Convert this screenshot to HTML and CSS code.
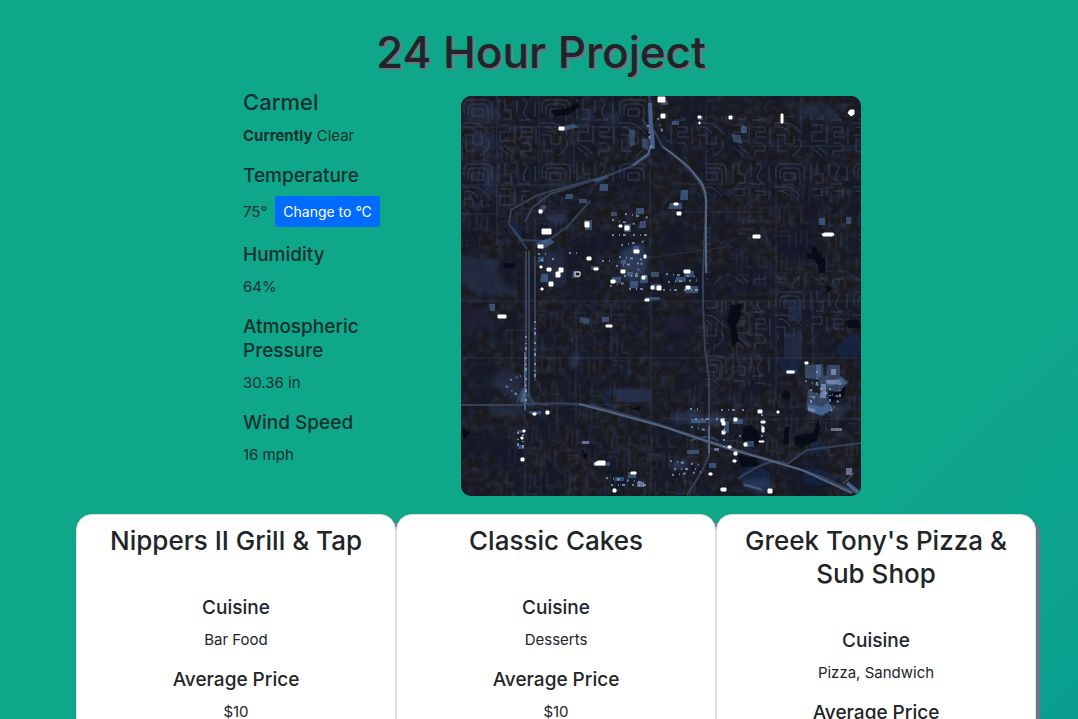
FILE: index.html
```html
<!DOCTYPE html>
<html lang="en">
<head>
<meta charset="utf-8">
<meta name="viewport" content="width=device-width, initial-scale=1">
<title>24 Hour Project</title>
<link rel="stylesheet" href="styles.css">
</head>
<body>
<header class="page-header"><h1 class="page-title">24 Hour Project</h1></header>
<main>
<section class="overview">
  <div class="weather">
    <h2 class="city">Carmel</h2>
    <p><strong>Currently</strong> Clear</p>
    <h3>Temperature</h3>
    <div class="temperature"><span>75°</span><button class="unit-button" type="button">Change to °C</button></div>
    <h3>Humidity</h3>
    <p>64%</p>
    <h3>Atmospheric Pressure</h3>
    <p>30.36 in</p>
    <h3>Wind Speed</h3>
    <p>16 mph</p>
  </div>
  <svg class="satellite" viewBox="0 0 400 400" role="img" aria-label="Satellite view of Carmel">
    <defs>
      <filter id="grain" x="0" y="0" width="100%" height="100%" color-interpolation-filters="sRGB">
        <feTurbulence type="fractalNoise" baseFrequency=".14" numOctaves="4" seed="8"/>
        <feColorMatrix values="0 0 0 0 .14  0 0 0 0 .17  0 0 0 0 .25  2.4 0 0 0 -.9"/>
      </filter>
      <filter id="shade" x="0" y="0" width="100%" height="100%" color-interpolation-filters="sRGB">
        <feTurbulence type="fractalNoise" baseFrequency=".03" numOctaves="4" seed="21"/>
        <feColorMatrix values="0 0 0 0 .07  0 0 0 0 .09  0 0 0 0 .16  0 2 0 0 -.75"/>
      </filter>
      <filter id="soft" x="0" y="0" width="400" height="400" filterUnits="userSpaceOnUse" color-interpolation-filters="sRGB"><feGaussianBlur stdDeviation=".6"/></filter>
      <filter id="diffuse" x="0" y="0" width="400" height="400" filterUnits="userSpaceOnUse" color-interpolation-filters="sRGB"><feGaussianBlur stdDeviation="2"/></filter>
      <pattern id="streets" width="78" height="64" patternUnits="userSpaceOnUse">
        <path d="M3 18V9Q3 4 9 4H25Q31 4 31 10V22M7 19V12Q7 8 12 8H22Q27 8 27 14V25M11 20V13H22V20Z M1 27H13Q18 27 22 31L29 38M5 31Q14 31 17 38M3 39H12V48H21V40M5 43V55H14M26 43Q31 49 25 55L19 60M38 3V23M44 3V14H50V23H43M56 4V17M61 3Q69 5 64 12T69 24H57M38 29H49V36H39V45H53M54 29V48M60 31H70V36H61V41H72M38 51L49 60M43 49L54 58M60 47Q72 45 70 55H60V60M74 6V21M75 31V48"/>
      </pattern>
      <pattern id="plots" width="40" height="46" patternUnits="userSpaceOnUse" patternTransform="rotate(3)">
        <path d="M4 3V18M9 2V22M14 5V18H20M26 3V17H35M4 26H17M4 31H15V41M22 26V42M27 24V38M33 25V42"/>
      </pattern>
    </defs>
    <rect width="400" height="400" fill="#1b191b"/>
    <rect width="400" height="400" filter="url(#grain)"/>
    <rect width="400" height="400" filter="url(#shade)"/>
    <g class="field" filter="url(#diffuse)">
      <path d="M120 13H131V29H120ZM142 16H159V29H142ZM22 61L37 74 35 99 22 102ZM0 158L38 164V178L55 199H15L0 187ZM341 7H359V22H341ZM361 12H376V26H361ZM155 293H190V306H155ZM40 309H62V320H28V312Z"/>
      <path class="violet" d="M0 217L15 211 30 222 36 238 17 233 0 239ZM202 229L214 218 227 226 225 238 204 236ZM266 115L283 120 279 130 265 124ZM303 167L317 174 312 184 302 180ZM81 112L106 119 94 132 80 121Z"/>
      <path d="M5 8H36V28H5ZM10 38H35V56H10ZM28 285L48 270 60 287 60 305 42 298ZM160 155L180 147 187 160 184 190 169 192 159 174ZM82 155H104V190H82Z"/>
    </g>
    <g filter="url(#soft)">
      <g class="street-lines">
        <path fill="url(#streets)" d="M0 0H185V85H75L60 110H0ZM205 20H400V100H250V180H400V235H310V195H245V50H205ZM245 205H310V290H245ZM310 205H352V245H310Z"/>
        <path class="streets-faint" fill="url(#plots)" d="M75 205H170V330H75ZM250 205H300V285H250ZM0 30H115V150H0ZM270 80H400V190H270ZM45 330H150V400H45ZM150 340H245V400H150ZM210 285H400V360H210Z"/>
      </g>
      <g class="field">
        <path d="M327 204H341V225H327ZM323 236H341V264H323ZM155 293H190V306H155Z"/>
        <path class="navy" d="M142 293H150V310H143ZM374 252L388 239 396 236 400 247V259L380 262ZM344 355L358 345 366 347 360 356 344 359ZM276 382Q294 361 309 377L308 391 287 389ZM344 370L365 376 374 385 359 390 341 386ZM320 263H338V279H321ZM52 125L62 132 59 145 48 137Z"/>
      </g>
      <path class="water" d="M270 209L281 208 279 222 275 229 278 245 271 250 269 232 266 225ZM346 157H351V151H356V157H361V162H364V177H358V172L353 163H346ZM365 188L371 193 366 197ZM282 331L290 329 298 336 300 347 290 352 281 343ZM325 294L330 299 326 305 320 300ZM324 331H328V348H322ZM334 340L352 337 357 324 359 331 356 345 340 352 334 349ZM277 359L295 362 298 370 280 371ZM365 299L378 295 385 287 383 300 366 309ZM385 225L398 223 400 232H387ZM170 313L179 310V315ZM121 354L127 359 123 363ZM90 14L107 12 116 6 119 10 110 18 94 21ZM43 167H53V172H43ZM0 331L10 336 3 344Z"/>
      <g class="roads thin">
        <path d="M36 0V108M78 0V85M113 30V82M152 0V60M0 31H190M0 89H103M0 118H36V88M36 107V145M74 123V225M189 55V155M190 185V395M64 160V400M0 205H400M0 262H400M315 70V305M352 200V330M0 309H170M212 116H305M290 50H400M205 88H260M245 82V10M340 0V35M210 323H400M200 323L218 322M255 350Q277 337 292 355M45 234H73M150 262V207M150 167L264 151 248 137M272 163L285 155M286 117L302 132 310 155M312 350Q322 365 316 378M80 335V395M115 210V330M51 234V265M96 290V335M43 300L58 276M47 306L62 281M74 281L86 306"/>
      </g>
      <g class="roads">
        <path d="M65 155V309M68 155V300M74 160V285M188 0L192 33 202 51M181 23L190 36 188 59 174 69 143 81Q95 93 77 99L50 114 48 128 66 153M143 81L89 98 71 112 64 126M129 105L107 130 77 152M48 128L61 144 88 145M0 309H55Q103 305 132 310Q163 318 194 327L248 345 310 364 359 380 400 399M200 49Q221 66 231 76Q244 91 245 107L242 177V208L244 253 248 282 248 360Q242 375 226 399M56 306L62 293 73 307 87 309M382 388L393 377M229 345Q247 337 257 345M277 383Q310 359 326 368L346 354 400 347"/>
        <path class="road-light" d="M190 8V37L192 44 187 58 172 69M64 256V314M202 51Q227 68 235 80Q246 91 245 106V177M118 308L145 315 200 330 269 353 341 374 391 397M248 330V357"/>
        <path class="road-wide" d="M189 7L190 36M191 35L192 53M61 306L64 295M386 387L398 397"/>
      </g>
      <g class="haze">
        <path d="M168 33L174 34V49L169 51ZM181 42L188 43 187 55 181 51ZM132 84L145 79 148 82 135 87ZM119 221L129 223 128 229 118 226ZM344 269L362 268 363 284 344 282ZM366 269H379V283H365ZM347 293L356 298 367 294 368 307 373 313 360 319 345 314ZM357 282L374 276 388 286 378 296 361 294ZM270 38L280 39 281 48 273 46Z"/>
        <path class="haze-faint" filter="url(#diffuse)" d="M84 119L108 116 103 127 92 129ZM59 290L70 300 75 309H56ZM160 155L180 147 187 160 184 178 169 185 159 174ZM210 318L235 314 244 322 238 329 212 327ZM241 322L255 317 267 321 258 332 246 330ZM209 366L225 362 229 374 211 374ZM283 383L306 382 314 392 299 399 282 391ZM370 308L387 310 381 324 369 320ZM108 258L119 255 120 265 111 275Z"/>
      </g>
      <g class="glow">
        <path d="M98 31L113 28 118 31 103 35ZM77 115L81 109 86 110 80 119ZM75 147L88 142 94 146 81 154ZM139 88H147V95H138ZM105 98H112V103H104ZM118 103H126V107H118ZM123 124H131V134H124ZM150 116H156V120H150ZM163 128H170V136H163ZM175 112H183V118H175ZM179 125H185V132H178ZM172 150H178V157H172ZM160 164H165V168H160ZM166 176H172V180H166ZM77 161H83V166H77ZM80 178H87V186H79ZM112 175H118V182H111ZM130 170H138V174H130ZM151 181H160V187H151ZM169 185H177V192H169ZM180 180H187V187H179ZM190 176H198V181H190ZM191 188H200V194H191ZM185 201H199V204H185ZM28 208H34V215H29ZM141 221H148V226H141ZM56 334H62V337H56ZM57 349H63V353H57ZM68 315H80V318H68ZM132 366H149V370H132ZM154 381H163V385H154ZM167 376H175V382H167ZM220 94H227V104H219ZM209 107H221V113H207ZM224 175H233V181H223ZM215 181H225V186H214ZM226 190H237V197H224ZM200 5H207V9H200ZM211 25H218V29H211ZM237 20H242V24H237ZM280 30H286V37H280ZM358 122H364V129H358ZM385 121H390V128H385ZM325 274L336 274 334 278 325 278ZM355 269H360V281H355ZM346 308L361 311 367 306 372 313 361 320 349 316ZM364 285L381 282 385 288 367 290ZM230 323H245V327H230ZM264 325H268V337H262ZM272 323H282V328H272ZM284 345H293V351H284ZM248 367H255V372H248ZM226 354H238V358H226ZM282 387L300 392 302 395 283 390Z"/>
        <path class="pale" d="M360 288H365V302H359ZM370 273H375V279H370ZM365 284L380 284 376 288 366 288ZM347 311L354 313 354 316 347 315ZM370 332H381V335H370ZM253 352H258V355H253ZM385 372H391V379H385ZM121 345H128V348H121ZM176 386H183V391H176Z"/>
      </g>
      <g class="lights">
        <path d="M81 133H90V138H81ZM124 126H128V131H124ZM98 31H103V34H98ZM164 130H168V134H164ZM158 129H161V131H158ZM77 149H82V152H77ZM78 114H81V117H78ZM86 172H90V175H86ZM95 176H99V181H95ZM98 172H102V176H98ZM88 186H92V190H88ZM80 192H82V194H80ZM79 170H81V172H79ZM126 161H130V164H126ZM133 172H137V174H133ZM150 184H154V187H150ZM160 174H164V177H160ZM173 154H178V157H173ZM183 159H185V162H183ZM181 180H184V183H181ZM190 190H193V193H190ZM196 190H200V194H196ZM197 1H204V6H197ZM200 18H204V22H200ZM237 20H240V22H237ZM238 26H239V28H238ZM268 20H271V23H268ZM320 18H322V27H320ZM387 17L389 14H393V18L390 20ZM292 139H299V142H292ZM361 138L364 137H372L373 139 371 140H362ZM213 107H217V109H213ZM216 116H220V119H216ZM223 174H229V177H223ZM225 190H229V193H225ZM37 219H45V222H37ZM145 229H151V231H145ZM184 203H188V205H184ZM62 334H64V336H62ZM60 341H62V343H60ZM60 362H63V365H60ZM85 315H88V318H85ZM72 317H75V319H72ZM134 367L137 365H144V369H134ZM152 393H155V396H152ZM170 376H175V378H170ZM260 323H263V326H260ZM261 326H264V329H261ZM273 322H276V325H273ZM297 314H301V317H297ZM300 325H304V327H300ZM283 347H286V350H283ZM301 331H303V336H301ZM261 335H264V338H261ZM273 356H276V359H273ZM267 350H270V352H267ZM272 364H275V366H272ZM260 392H265V395H260ZM344 266H347V268H344ZM326 275H333V277H326ZM307 393H311V397H307ZM298 345H303V346H298ZM248 377H251V379H248ZM316 315H318V317H316Z"/>
        <path class="light-outline" d="M114 176H119V180H114Z"/>
      </g>
      <g class="sparkles">
        <path d="M77 158H87M80 164H84M91 163H96M108 157H119M141 165H150M158 161L185 164M155 170L181 167M163 180H190M149 190L164 187M168 193H184M205 178L237 181M207 186L239 184M202 194H241M164 118L190 122M151 124L174 128M151 139H186M160 149L186 145M229 313H240M234 323H264M260 314H284M230 331L250 335M278 340H281M301 318V346M263 322V354M209 365L239 369M213 373H235M211 379L240 376M145 382L180 386M150 389H190M57 336V351M62 338V358M350 293V311M356 275V294M369 292V312M379 287V302M344 285L362 290 352 302M364 297L380 301 370 315M181 167L174 181M197 22L202 38M187 29L190 52M65 240V305M74 225V285M45 290L60 302M49 284L60 280"/>
      </g>
    </g>
  </svg>
</section>
<section class="restaurants" aria-label="Restaurants">
  <article class="card"><h2>Nippers II Grill &amp; Tap</h2><h3>Cuisine</h3><p>Bar Food</p><h3>Average Price</h3><p>$10</p></article>
  <article class="card"><h2>Classic Cakes</h2><h3>Cuisine</h3><p>Desserts</p><h3>Average Price</h3><p>$10</p></article>
  <article class="card"><h2>Greek Tony's Pizza &amp; Sub Shop</h2><h3>Cuisine</h3><p>Pizza, Sandwich</p><h3>Average Price</h3><p>$10</p></article>
</section>
</main>
</body>
</html>
```

FILE: styles.css
```css
* { box-sizing: border-box; }
body {
  margin: 0;
  min-height: 100vh;
  color: #212529;
  background: linear-gradient(135deg, #0fa78a 0%, #0fa78a 72%, #089d90 100%) no-repeat;
  font: 400 15px/24px Inter, "Liberation Sans", sans-serif;
}
h1, h2, h3, p { margin: 0; font-weight: 500; }
h3 { font-size: 19px; line-height: 24px; margin-bottom: 8px; }
p { margin-bottom: 16px; font-weight: 400; }
strong { font-weight: 700; }
.page-header { padding: 24px 0 8px 4px; text-align: center; }
.page-title { font-size: 44px; line-height: 56px; text-shadow: 2px 2px #6c757d; }
.overview {
  display: flex;
  justify-content: center;
  align-items: flex-start;
  gap: 80px;
  padding-left: 26px;
  color: #15302f;
}
.weather { width: 138px; flex: none; }
.city { font-size: 22px; line-height: 28px; margin-bottom: 8px; }
.temperature { display: flex; align-items: center; gap: 8px; margin-bottom: 16px; white-space: nowrap; }
.unit-button {
  height: 31px;
  padding: 0 8px;
  border: 0;
  border-radius: 3px;
  background: #006bff;
  color: #fff;
  font: 400 14px/21px Inter, "Liberation Sans", sans-serif;
}
.satellite { display: block; flex: 0 1 400px; min-width: 0; margin-top: 8px; border-radius: 10px; }
.street-lines { opacity: .75; }
#streets path, #plots path { fill: none; stroke: #414962; stroke-width: 1; }
.streets-faint { opacity: .6; }
.field { fill: #28334f; opacity: .6; }
.violet { fill: #25213c; }
.navy { fill: #17294f; }
.water { fill: #070d18; }
.roads { fill: none; stroke: #344157; stroke-width: 2; }
.thin { stroke: #303b51; stroke-width: 1; opacity: .65; }
.road-light { stroke: #526481; stroke-width: 2; }
.road-wide { stroke: #4a6087; stroke-width: 4; }
.haze { fill: #496189; opacity: .6; }
.haze-faint { opacity: .5; }
.glow { fill: #537bb0; opacity: .55; }
.pale { fill: #a2b6df; }
.lights { fill: #fff; stroke: #fff; stroke-width: 1; stroke-linejoin: round; }
.light-outline { fill: #17171d; }
.sparkles { fill: none; stroke: #91b2dc; stroke-width: 2; stroke-dasharray: 2 5 1 3 3 7; opacity: .7; }
.restaurants {
  display: grid;
  grid-template-columns: repeat(3, minmax(0, 1fr));
  margin-top: 18px;
  padding: 0 42px 24px 76px;
  text-align: center;
}
.card {
  padding: 9px 20px 0;
  border: 1px solid #dfdfdf;
  border-radius: 16px;
  background: #fff;
  box-shadow: 4px 4px #6c758a;
}
.card h2 { font-size: 26px; line-height: 33px; margin-bottom: 39px; }
```
